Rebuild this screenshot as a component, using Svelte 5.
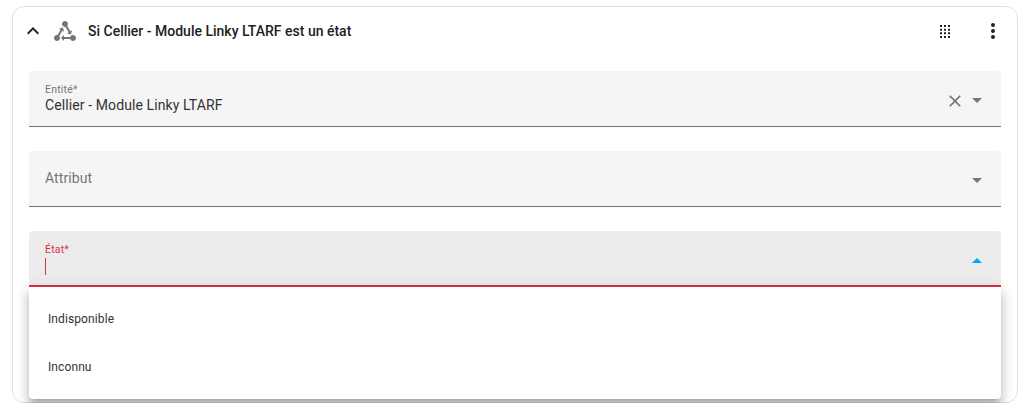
<script>
  const options = ['Indisponible', 'Inconnu'];
</script>

<div class="card">
  <div class="head">
    <svg class="chevron" viewBox="0 0 24 24" width="24" height="24">
      <path d="M7.41,15.41L12,10.83L16.59,15.41L18,14L12,8L6,14L7.41,15.41Z" />
    </svg>
    <svg class="type-icon" viewBox="0 0 24 24" width="24" height="24">
      <path d="M6.27 17.05C6.72 17.58 7 18.25 7 19C7 20.66 5.66 22 4 22S1 20.66 1 19 2.34 16 4 16C4.18 16 4.36 16 4.53 16.05L7.6 10.69L5.86 9.7L9.95 8.58L11.07 12.67L9.33 11.68L6.27 17.05M20 16C18.7 16 17.6 16.84 17.18 18H11V16L8 19L11 22V20H17.18C17.6 21.16 18.7 22 20 22C21.66 22 23 20.66 23 19S21.66 16 20 16M12 8C12.18 8 12.36 8 12.53 7.95L15.6 13.31L13.86 14.3L17.95 15.42L19.07 11.33L17.33 12.32L14.27 6.95C14.72 6.42 15 5.75 15 5C15 3.34 13.66 2 12 2S9 3.34 9 5 10.34 8 12 8Z" />
    </svg>
    <div class="title">Si Cellier - Module Linky LTARF est un état</div>
    <svg class="grip" viewBox="0 0 24 24" width="24" height="24">
      <path d="M6 6h2v2H6zM10 6h2v2h-2zM14 6h2v2h-2zM6 9.67h2v2H6zM10 9.67h2v2h-2zM14 9.67h2v2h-2zM6 13.33h2v2H6zM10 13.33h2v2h-2zM14 13.33h2v2h-2zM6 17h2v2H6zM10 17h2v2h-2zM14 17h2v2h-2z" />
    </svg>
    <svg class="more" viewBox="0 0 24 24" width="24" height="24">
      <path d="M12,16A2,2 0 0,1 14,18A2,2 0 0,1 12,20A2,2 0 0,1 10,18A2,2 0 0,1 12,16M12,10A2,2 0 0,1 14,12A2,2 0 0,1 12,14A2,2 0 0,1 10,12A2,2 0 0,1 12,10M12,4A2,2 0 0,1 14,6A2,2 0 0,1 12,8A2,2 0 0,1 10,6A2,2 0 0,1 12,4Z" />
    </svg>
  </div>

  <div class="fields">
    <div class="field">
      <div class="content">
        <span class="label">Entité*</span>
        <span class="value">Cellier - Module Linky LTARF</span>
      </div>
      <svg class="clear" viewBox="0 0 24 24" width="20" height="20">
        <path d="M19,6.41L17.59,5L12,10.59L6.41,5L5,6.41L10.59,12L5,17.59L6.41,19L12,13.41L17.59,19L19,17.59L13.41,12L19,6.41Z" />
      </svg>
      <svg class="caret" viewBox="0 0 24 24" width="24" height="24"><path d="M7,10L12,15L17,10H7Z" /></svg>
    </div>

    <div class="field">
      <div class="content center">
        <span class="placeholder">Attribut</span>
      </div>
      <svg class="caret" viewBox="0 0 24 24" width="24" height="24"><path d="M7,10L12,15L17,10H7Z" /></svg>
    </div>

    <div class="field open">
      <div class="content">
        <span class="label">État*</span>
        <span class="value"><i class="cursor"></i></span>
      </div>
      <svg class="caret" viewBox="0 0 24 24" width="24" height="24"><path d="M7,15L12,10L17,15H7Z" /></svg>

      <ul class="menu">
        {#each options as option}
          <li>{option}</li>
        {/each}
      </ul>
    </div>
  </div>
</div>

<style>
  :global(body) {
    background: #fff;
    font-family: Roboto, "Liberation Sans", sans-serif;
  }
  .card {
    width: 1006px;
    height: 397px;
    margin: 6px 0 0 12px;
    box-sizing: border-box;
    border: 1px solid #e0e0e0;
    border-radius: 12px;
  }
  .head {
    display: flex;
    align-items: center;
    height: 48px;
    padding: 0 12px 0 8px;
  }
  .head svg {
    flex: none;
  }
  .chevron {
    fill: #212121;
  }
  .type-icon {
    margin-left: 8px;
    fill: #757575;
  }
  .title {
    flex: 1;
    margin-left: 11px;
    font-size: 14px;
    font-weight: 500;
    color: #212121;
  }
  .grip {
    fill: #212121;
    margin-right: 23px;
  }
  .more {
    fill: #212121;
  }
  .fields {
    display: flex;
    flex-direction: column;
    gap: 24px;
    padding: 16px 16px 0 16px;
  }
  .field {
    position: relative;
    display: flex;
    align-items: center;
    height: 56px;
    box-sizing: border-box;
    padding: 0 12px 0 16px;
    background: #f5f5f5;
    border-bottom: 1px solid #757575;
    border-radius: 4px 4px 0 0;
  }
  .field.open {
    background: #ececec;
    border-bottom: 2px solid #db3043;
  }
  .content {
    flex: 1;
    display: flex;
    flex-direction: column;
    padding-bottom: 1px;
  }
  .content.center {
    padding-bottom: 2px;
  }
  .open .content {
    padding-bottom: 0;
  }
  .label {
    font-size: 10.5px;
    line-height: 14px;
    letter-spacing: 0.2px;
    color: #757575;
  }
  .open .label {
    line-height: 16px;
    color: #db3043;
  }
  .value {
    font-size: 14px;
    line-height: 16px;
    letter-spacing: 0.1px;
    color: #333;
  }
  .placeholder {
    font-size: 14px;
    letter-spacing: 0.1px;
    color: #757575;
  }
  .cursor {
    display: block;
    width: 1px;
    height: 17px;
    background: #db3043;
  }
  .clear {
    fill: #757575;
    margin-top: 4px;
  }
  .caret {
    fill: #757575;
    margin-top: 2px;
  }
  .open .caret {
    fill: #03a9f4;
    margin-top: 3px;
  }
  .menu {
    position: absolute;
    top: 56px;
    left: 0;
    right: 0;
    margin: 0;
    padding: 8px 0;
    list-style: none;
    background: #fff;
    border-radius: 0 0 4px 4px;
    box-shadow: 0 5px 5px -3px rgba(0, 0, 0, 0.2), 0 8px 10px 1px rgba(0, 0, 0, 0.14), 0 3px 14px 2px rgba(0, 0, 0, 0.12);
  }
  .menu li {
    height: 48px;
    line-height: 48px;
    padding-left: 19px;
    font-size: 12px;
    letter-spacing: 0.1px;
    color: #333;
  }
</style>
